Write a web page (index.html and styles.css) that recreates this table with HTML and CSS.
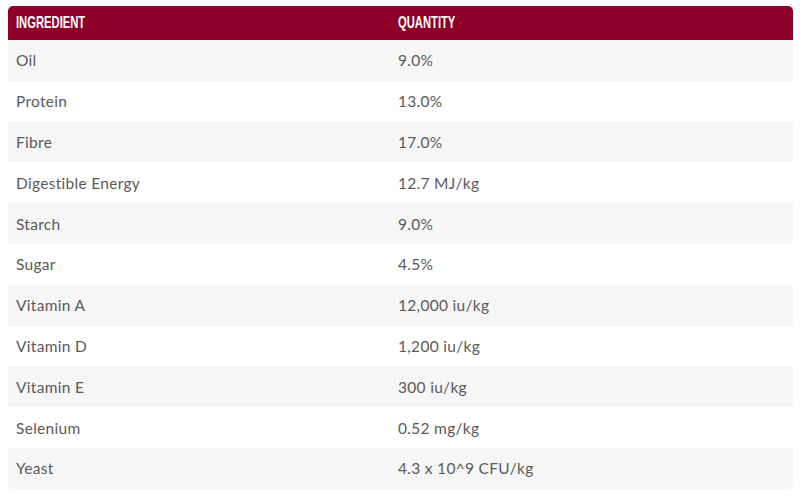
FILE: index.html
```html
<!DOCTYPE html>
<html>
<head>
<meta charset="utf-8">
<link rel="stylesheet" href="styles.css">
</head>
<body>
<table class="nutri">
  <thead>
    <tr><th class="c1"><span class="hd">Ingredient</span></th><th><span class="hd">Quantity</span></th></tr>
  </thead>
  <tbody>
    <tr><td class="c1">Oil</td><td>9.0%</td></tr>
    <tr><td class="c1">Protein</td><td>13.0%</td></tr>
    <tr><td class="c1">Fibre</td><td>17.0%</td></tr>
    <tr><td class="c1">Digestible Energy</td><td>12.7 MJ/kg</td></tr>
    <tr><td class="c1">Starch</td><td>9.0%</td></tr>
    <tr><td class="c1">Sugar</td><td>4.5%</td></tr>
    <tr><td class="c1">Vitamin A</td><td>12,000 iu/kg</td></tr>
    <tr><td class="c1">Vitamin D</td><td>1,200 iu/kg</td></tr>
    <tr><td class="c1">Vitamin E</td><td>300 iu/kg</td></tr>
    <tr><td class="c1">Selenium</td><td>0.52 mg/kg</td></tr>
    <tr><td class="c1">Yeast</td><td>4.3 x 10^9 CFU/kg</td></tr>
  </tbody>
</table>
</body>
</html>
```
FILE: styles.css
```css
html, body {
  margin: 0;
  background: #ffffff;
}
body {
  padding: 6px 7px 0 8px;
}
.nutri {
  width: 785px;
  border-collapse: separate;
  border-spacing: 0;
  font-family: "Lato", "Noto Sans", sans-serif;
}
.nutri th {
  background: #8e0029;
  color: #ffffff;
  text-align: left;
  height: 34px;
  padding: 0 8px;
  font-family: "Liberation Sans", "DejaVu Sans", sans-serif;
  font-weight: bold;
  font-size: 17px;
  text-transform: uppercase;
  vertical-align: middle;
  white-space: nowrap;
}
.nutri .hd {
  display: inline-block;
  transform: scaleX(0.66);
  transform-origin: left center;
  letter-spacing: 0;
}
.nutri th:first-child { border-top-left-radius: 5px; }
.nutri th:last-child { border-top-right-radius: 5px; }
.nutri td {
  height: 40.8px;
  padding: 0 8px;
  font-size: 15.5px;
  letter-spacing: 0.3px;
  color: #5a5a5a;
  vertical-align: middle;
}
.nutri .c1 { width: 366px; }
.nutri tbody tr:nth-child(odd) td { background: #f6f6f6; }
.nutri tbody tr:last-child td:first-child { border-bottom-left-radius: 5px; }
.nutri tbody tr:last-child td:last-child { border-bottom-right-radius: 5px; }
```
